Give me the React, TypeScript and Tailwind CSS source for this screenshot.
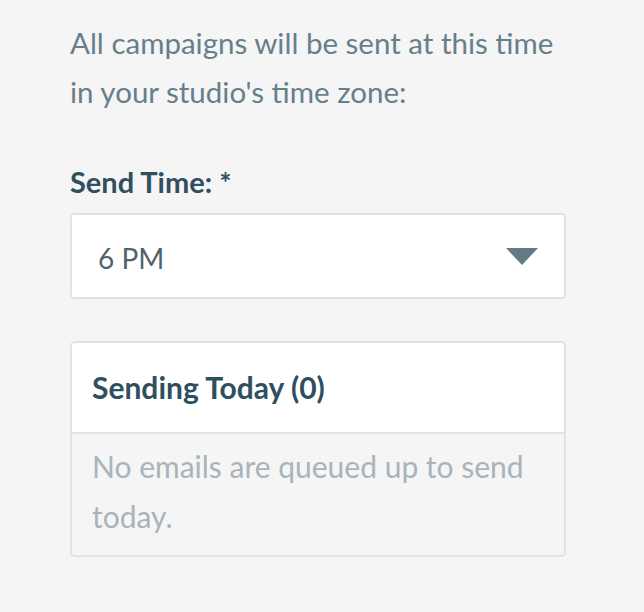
export default function App() {
  return (
    <div
      className="min-h-screen bg-[#f5f5f5] px-[70px] pt-[18px]"
      style={{ fontFamily: 'Lato, "Noto Sans", sans-serif' }}
    >
      <div className="w-[496px]">
        <p className="text-[29.5px] leading-[49px] text-[#677f8b]">
          All campaigns will be sent at this time in your studio's time zone:
        </p>

        <label className="mt-[51px] block text-[29px] font-bold leading-[30px] text-[#2f4f5e]">
          Send Time: *
        </label>
        <div className="mt-[16px] flex h-[86px] items-center justify-between rounded-[4px] border-2 border-[#dfe3e6] bg-white pl-[26px] pr-[26px] pt-[3px]">
          <span className="text-[28px] text-[#4f636d]">6 PM</span>
          <svg width="32" height="17" viewBox="0 0 32 17" className="-mt-[3px]">
            <path d="M0 0 L32 0 L16 17 Z" fill="#647a86" />
          </svg>
        </div>

        <div className="mt-[42px] overflow-hidden rounded-[5px] border-2 border-[#dfe3e6]">
          <div className="flex h-[89px] items-center bg-white px-[20px]">
            <h3 className="text-[30px] font-bold text-[#2f4f5e]">Sending Today (0)</h3>
          </div>
          <div className="border-t-2 border-[#dfe3e6] px-[20px] pt-[7px] pb-[14px]">
            <p className="text-[30px] leading-[50px] text-[#a7b4bb]">
              No emails are queued up to send today.
            </p>
          </div>
        </div>
      </div>
    </div>
  );
}
